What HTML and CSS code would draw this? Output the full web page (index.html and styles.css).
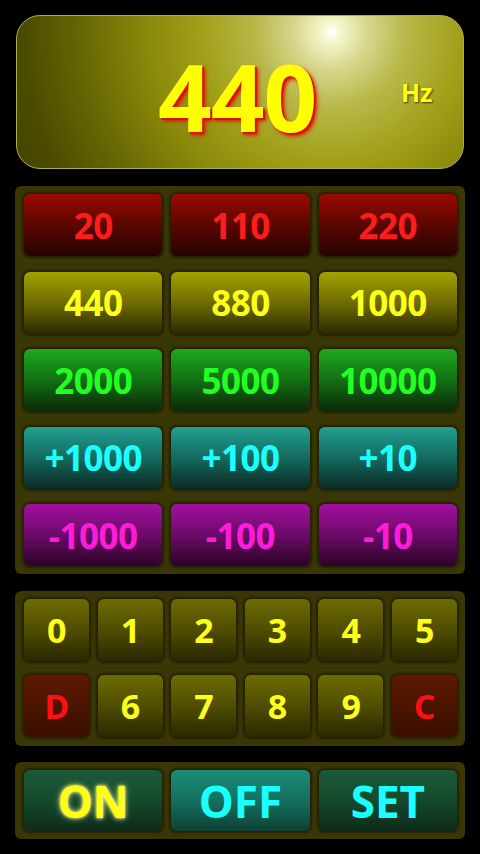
FILE: index.html
```html
<!DOCTYPE html>
<html>
<head>
<meta charset="utf-8">
<link rel="stylesheet" href="styles.css">
</head>
<body>
<div class="screen">
  <div class="display">
    <span class="freq">440</span>
    <span class="unit">Hz</span>
  </div>

  <div class="panel presets">
    <div class="btn red">20</div>
    <div class="btn red">110</div>
    <div class="btn red">220</div>
    <div class="btn yellow">440</div>
    <div class="btn yellow">880</div>
    <div class="btn yellow">1000</div>
    <div class="btn green">2000</div>
    <div class="btn green">5000</div>
    <div class="btn green">10000</div>
    <div class="btn teal">+1000</div>
    <div class="btn teal">+100</div>
    <div class="btn teal">+10</div>
    <div class="btn magenta">-1000</div>
    <div class="btn magenta">-100</div>
    <div class="btn magenta">-10</div>
  </div>

  <div class="panel keypad">
    <div class="btn key">0</div>
    <div class="btn key">1</div>
    <div class="btn key">2</div>
    <div class="btn key">3</div>
    <div class="btn key">4</div>
    <div class="btn key">5</div>
    <div class="btn key del">D</div>
    <div class="btn key">6</div>
    <div class="btn key">7</div>
    <div class="btn key">8</div>
    <div class="btn key">9</div>
    <div class="btn key del">C</div>
  </div>

  <div class="panel controls">
    <div class="btn ctl on">ON</div>
    <div class="btn ctl off">OFF</div>
    <div class="btn ctl set">SET</div>
  </div>
</div>
</body>
</html>
```

FILE: styles.css
```css
html, body {
  margin: 0;
  padding: 0;
  background: #000;
}

body {
  width: 480px;
  height: 854px;
  overflow: hidden;
  font-family: "Open Sans", "Noto Sans", "DejaVu Sans", sans-serif;
  font-weight: 700;
}

.screen {
  display: flex;
  flex-direction: column;
  padding: 15px 15px 0 15px;
}

.display {
  box-sizing: border-box;
  height: 154px;
  margin: 0 1px 0 1px;
  border: 1px solid #b0b040;
  border-radius: 24px;
  background:
    radial-gradient(circle at 314px 16px,
      #ffffff 0px,
      #f4f4c8 12px,
      #d8d890 36px,
      #b8b84a 75px,
      #a0a018 130px,
      #86860a 190px,
      #666604 250px,
      #4a4a00 310px,
      #3a3a00 420px);
  position: relative;
}

.freq {
  position: absolute;
  left: 141px;
  top: 33px;
  font-size: 94px;
  line-height: 1;
  color: #ffff00;
  letter-spacing: -1px;
  text-shadow: 3px 3px 4px #e01000, 2px 2px 1px #c01000;
}

.unit {
  position: absolute;
  left: 384px;
  top: 64px;
  font-size: 25px;
  line-height: 1;
  color: #ffff10;
  text-shadow: 1px 1px 2px #503000;
}

.panel {
  background: #393705;
  border-radius: 6px;
  padding: 8px 8px 8px 9px;
  display: grid;
}

.presets {
  margin-top: 17px;
  grid-template-columns: repeat(3, 1fr);
  grid-auto-rows: 62px;
  column-gap: 9px;
  row-gap: 15.5px;
}

.keypad {
  margin-top: 17px;
  grid-template-columns: repeat(6, 1fr);
  grid-auto-rows: 62px;
  column-gap: 8.5px;
  row-gap: 14px;
  padding-bottom: 9px;
}

.controls {
  margin-top: 16px;
  grid-template-columns: repeat(3, 1fr);
  grid-auto-rows: 61px;
  column-gap: 9px;
}

.btn {
  border-radius: 6px;
  display: flex;
  align-items: center;
  justify-content: center;
  font-size: 35px;
  line-height: 1;
  letter-spacing: -0.5px;
  box-shadow: 0 0 2px 2px rgba(20, 14, 0, 0.55);
}

.red {
  background: linear-gradient(#9c0a00, #5a0600 50%, #240400);
  color: #ff1c1c;
}

.yellow {
  background: linear-gradient(#a2a200, #6e6c00 50%, #2c2a00);
  color: #ffff1c;
}

.green {
  background: linear-gradient(#1ea81e, #137013 50%, #0a2a0a);
  color: #22ff22;
}

.teal {
  background: linear-gradient(#20a090, #146a5e 50%, #0a2a24);
  color: #1cffff;
}

.magenta {
  background: linear-gradient(#a210a0, #6c0a68 50%, #2a0426);
  color: #ff1cd8;
}

.key {
  font-size: 34px;
  background: linear-gradient(#6e6c00, #4c4a00 55%, #2a2800);
  color: #ffff1c;
}

.key.del {
  background: linear-gradient(#5e1a00, #4a1400 55%, #3a0e00);
  color: #ff1010;
}

.ctl {
  font-size: 44px;
  letter-spacing: 0;
}

.on {
  background: linear-gradient(#1c5a38, #144a2c 50%, #0e2a1a);
  color: #ffff10;
  text-shadow: 0 0 3px #ffffa0, 0 0 6px #e0e080;
}

.off {
  background: linear-gradient(#1c8c78, #137060 50%, #0e4034);
  color: #1cffff;
}

.set {
  background: linear-gradient(#1c5a38, #144a2c 50%, #0e2a1a);
  color: #1cffff;
}
```
